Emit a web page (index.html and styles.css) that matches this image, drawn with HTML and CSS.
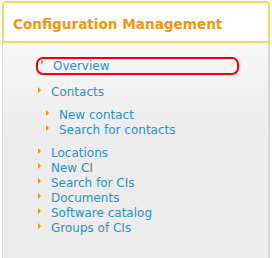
FILE: index.html
```html
<!DOCTYPE html>
<html lang="en">

<head>
  <meta charset="UTF-8">
  <title>Configuration Management</title>
  <link rel="stylesheet" href="styles.css">
</head>

<body>
  <div class="panel">
    <div class="panel-head">
      <h2 class="panel-title">Configuration Management</h2>
    </div>
    <div class="panel-body">
      <ul class="menu">
        <li class="menu-item active"><a href="#">Overview</a></li>
        <li class="menu-item"><a href="#">Contacts</a>
          <ul class="submenu">
            <li class="menu-item"><a href="#">New contact</a></li>
            <li class="menu-item"><a href="#">Search for contacts</a></li>
          </ul>
        </li>
        <li class="menu-item"><a href="#">Locations</a></li>
        <li class="menu-item"><a href="#">New CI</a></li>
        <li class="menu-item"><a href="#">Search for CIs</a></li>
        <li class="menu-item"><a href="#">Documents</a></li>
        <li class="menu-item"><a href="#">Software catalog</a></li>
        <li class="menu-item"><a href="#">Groups of CIs</a></li>
      </ul>
    </div>
  </div>
</body>

</html>
```

FILE: styles.css
```css
* {
  margin: 0;
  padding: 0;
}

html,
body {
  height: 100%;
}

body {
  font-family: "DejaVu Sans", Verdana, sans-serif;
  font-size: 12px;
  background: #ffffff;
}

.panel {
  height: 100%;
  margin: 0 2px;
  padding-top: 1px;
  display: flex;
  flex-direction: column;
  box-sizing: border-box;
}

.panel-head {
  height: 42px;
  background: #ffffff;
  border: 2px solid #f8d562;
  border-radius: 4px 4px 0 0;
  box-sizing: border-box;
  padding: 12px 0 0 9px;
}

.panel-title {
  font-size: 13.6px;
  font-weight: bold;
  color: #f0960e;
  line-height: 18px;
}

.panel-body {
  flex: 1;
  background: linear-gradient(#f8f8f8, #ececec 90px, #ececec);
  border-left: 1px solid #dcdcd4;
  border-right: 2px solid #d8d8d0;
  padding: 15px 0 0 35px;
}

.menu {
  list-style: none;
}

.menu-item {
  line-height: 15px;
}

.menu-item > a {
  display: inline-block;
  position: relative;
  padding-left: 13px;
  color: #2b91c6;
  text-decoration: none;
}

/* little orange arrow in front of each link */
.menu-item > a::before {
  content: "";
  position: absolute;
  left: 0;
  top: 2px;
  border-left: 3px solid #ee9410;
  border-top: 3px solid transparent;
  border-bottom: 3px solid transparent;
}

.menu-item.active {
  width: 203px;
  height: 18px;
  border: 2px solid #f00000;
  border-radius: 7px;
  padding-left: 3px;
  margin: -1px 0 10px -2px;
  box-sizing: border-box;
}

.menu-item.active > a {
  padding-left: 12px;
  line-height: 14px;
}

.menu-item.active > a::before {
  top: 0;
}

.submenu {
  list-style: none;
  margin: 8px 0 8px 8px;
}
```
